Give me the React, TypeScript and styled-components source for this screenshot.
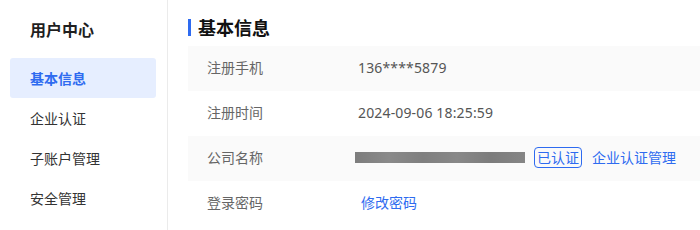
import React from "react";
import styled, { createGlobalStyle } from "styled-components";

const Global = createGlobalStyle`
  html, body { margin: 0; padding: 0; background: #fff; }
  body { font-family: "Noto Sans CJK SC", "Noto Sans", sans-serif; }
  * { box-sizing: border-box; }
`;

const Page = styled.div`
  display: flex;
  width: 700px;
  height: 230px;
  background: #fff;
  overflow: hidden;
`;

const Sidebar = styled.nav`
  width: 168px;
  flex-shrink: 0;
  border-right: 1px solid #ebebeb;
  padding: 10px 11px 0 10px;
  display: flex;
  flex-direction: column;
`;

const SideTitle = styled.div`
  height: 37px;
  padding-left: 20px;
  display: flex;
  align-items: center;
  font-size: 16px;
  font-weight: 600;
  color: #1f1f1f;
  margin-bottom: 11px;
`;

const NavItem = styled.div<{ $active?: boolean }>`
  height: 40px;
  padding-left: 20px;
  display: flex;
  align-items: center;
  font-size: 14px;
  border-radius: 3px;
  color: ${(p) => (p.$active ? "#2e6bf0" : "#333")};
  font-weight: ${(p) => (p.$active ? 600 : 400)};
  background: ${(p) => (p.$active ? "#e6eeff" : "transparent")};
`;

const Main = styled.main`
  flex: 1;
  padding: 17px 0 0 20px;
  display: flex;
  flex-direction: column;
`;

const Heading = styled.h2`
  margin: 0 0 9px 0;
  height: 20px;
  display: flex;
  align-items: center;
  gap: 7px;
  font-size: 18px;
  font-weight: 700;
  color: #111;
  &::before {
    content: "";
    width: 3px;
    height: 17px;
    background: #2e6bf0;
  }
`;

const Row = styled.div<{ $shaded?: boolean }>`
  height: 45px;
  display: flex;
  align-items: center;
  padding-bottom: 3px;
  background: ${(p) => (p.$shaded ? "#fafafa" : "transparent")};
  font-size: 14px;
`;

const Label = styled.div`
  width: 170px;
  padding-left: 19px;
  color: #666;
`;

const Value = styled.div`
  display: flex;
  align-items: center;
  color: #555;
  letter-spacing: 0.15px;
  font-family: "Noto Sans", "Noto Sans CJK SC", sans-serif;
`;

const Blurred = styled.span`
  display: inline-block;
  width: 170px;
  height: 11px;
  margin: 1px 9px 0 -3px;
  background: linear-gradient(90deg, #7d7d7d, #8a8a8a 20%, #7f7f7f 40%, #888 60%, #7c7c7c 80%, #858585);
  filter: blur(0.6px);
`;

const Badge = styled.span`
  display: inline-flex;
  align-items: center;
  height: 21px;
  padding: 0 2px;
  border: 1px solid #2e6bf0;
  border-radius: 4px;
  color: #2e6bf0;
  font-size: 14px;
  letter-spacing: 0;
  font-family: "Noto Sans CJK SC", sans-serif;
  margin-right: 10px;
`;

const Link = styled.a<{ $offset?: number }>`
  color: #2e6bf0;
  text-decoration: none;
  cursor: pointer;
  letter-spacing: 0;
  font-family: "Noto Sans CJK SC", sans-serif;
  margin-left: ${(p) => p.$offset ?? 0}px;
`;

export default function App() {
  return (
    <>
      <Global />
      <Page>
        <Sidebar>
          <SideTitle>用户中心</SideTitle>
          <NavItem $active>基本信息</NavItem>
          <NavItem>企业认证</NavItem>
          <NavItem>子账户管理</NavItem>
          <NavItem>安全管理</NavItem>
        </Sidebar>
        <Main>
          <Heading>基本信息</Heading>
          <Row $shaded>
            <Label>注册手机</Label>
            <Value>136****5879</Value>
          </Row>
          <Row>
            <Label>注册时间</Label>
            <Value>2024-09-06 18:25:59</Value>
          </Row>
          <Row $shaded>
            <Label>公司名称</Label>
            <Value>
              <Blurred />
              <Badge>已认证</Badge>
              <Link>企业认证管理</Link>
            </Value>
          </Row>
          <Row>
            <Label>登录密码</Label>
            <Value>
              <Link $offset={3}>修改密码</Link>
            </Value>
          </Row>
        </Main>
      </Page>
    </>
  );
}
